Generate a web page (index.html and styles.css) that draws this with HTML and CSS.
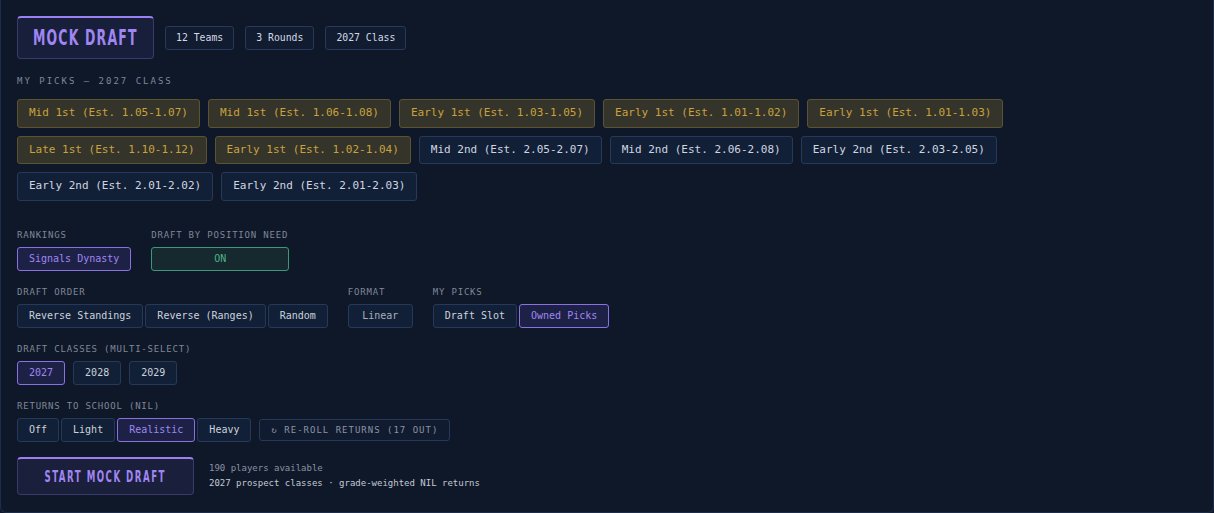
FILE: index.html
```html
<html>
  <head>
    <title>Mock Draft</title>
    <link rel="stylesheet" href="styles.css">
  </head>
  <body>
  <div id="main">
    <div class="header">
      <div class="title"><span>MOCK DRAFT</span></div>
      <span class="chip">12 Teams</span>
      <span class="chip">3 Rounds</span>
      <span class="chip">2027 Class</span>
    </div>

    <div class="picks-section">
      <div class="section-label">MY PICKS — 2027 CLASS</div>
      <div class="picks">
        <span class="pick gold">Mid 1st (Est. 1.05-1.07)</span>
        <span class="pick gold">Mid 1st (Est. 1.06-1.08)</span>
        <span class="pick gold">Early 1st (Est. 1.03-1.05)</span>
        <span class="pick gold">Early 1st (Est. 1.01-1.02)</span>
        <span class="pick gold">Early 1st (Est. 1.01-1.03)</span>
        <span class="pick gold">Late 1st (Est. 1.10-1.12)</span>
        <span class="pick gold">Early 1st (Est. 1.02-1.04)</span>
        <span class="pick">Mid 2nd (Est. 2.05-2.07)</span>
        <span class="pick">Mid 2nd (Est. 2.06-2.08)</span>
        <span class="pick">Early 2nd (Est. 2.03-2.05)</span>
        <span class="pick">Early 2nd (Est. 2.01-2.02)</span>
        <span class="pick">Early 2nd (Est. 2.01-2.03)</span>
      </div>
    </div>

    <div class="settings">
      <div class="row">
        <div class="group">
          <div class="label">RANKINGS</div>
          <div class="btns"><button class="btn active">Signals Dynasty</button></div>
        </div>
        <div class="group">
          <div class="label">DRAFT BY POSITION NEED</div>
          <div class="btns"><button class="btn toggle">ON</button></div>
        </div>
      </div>

      <div class="row">
        <div class="group">
          <div class="label">DRAFT ORDER</div>
          <div class="btns joined">
            <button class="btn">Reverse Standings</button>
            <button class="btn">Reverse (Ranges)</button>
            <button class="btn">Random</button>
          </div>
        </div>
        <div class="group">
          <div class="label">FORMAT</div>
          <div class="btns"><button class="btn dim">Linear</button></div>
        </div>
        <div class="group">
          <div class="label">MY PICKS</div>
          <div class="btns joined">
            <button class="btn">Draft Slot</button>
            <button class="btn active">Owned Picks</button>
          </div>
        </div>
      </div>

      <div class="row">
        <div class="group">
          <div class="label">DRAFT CLASSES (MULTI-SELECT)</div>
          <div class="btns">
            <button class="btn active">2027</button>
            <button class="btn">2028</button>
            <button class="btn">2029</button>
          </div>
        </div>
      </div>

      <div class="row">
        <div class="group">
          <div class="label">RETURNS TO SCHOOL (NIL)</div>
          <div class="btns">
            <div class="joined">
              <button class="btn">Off</button>
              <button class="btn">Light</button>
              <button class="btn active">Realistic</button>
              <button class="btn">Heavy</button>
            </div>
            <button class="reroll">↻ RE-ROLL RETURNS (17 OUT)</button>
          </div>
        </div>
      </div>
    </div>

    <div class="start-row">
      <button class="start"><span>START MOCK DRAFT</span></button>
      <div class="start-info">
        <div class="muted">190 players available</div>
        <div>2027 prospect classes · grade-weighted NIL returns</div>
      </div>
    </div>
  </div>
  </body>
</html>
```

FILE: styles.css
```css
html, body {
  margin: 0;
  background-color: #0f1829;
}
body {
  font-family: "DejaVu Sans Mono", "Liberation Mono", monospace;
  color: #d3d9e3;
}
#main {
  box-sizing: border-box;
  min-height: 100vh;
  padding: 16px;
  border: 1px solid #1d2d48;
  border-top: 0;
  border-radius: 0 0 6px 6px;
}
button {
  font-family: inherit;
  cursor: pointer;
}

/* header */
.header {
  display: flex;
  align-items: center;
  gap: 11px;
}
.title {
  box-sizing: border-box;
  width: 137px;
  height: 43px;
  display: flex;
  align-items: center;
  justify-content: center;
  background-color: #181f3b;
  border: 1px solid #3a3a6c;
  border-top: 2px solid #9a80f0;
  border-radius: 4px;
  white-space: nowrap;
}
.title span {
  display: inline-block;
  font-family: "DejaVu Sans Condensed", "DejaVu Sans", sans-serif;
  font-weight: bold;
  font-size: 21px;
  letter-spacing: 1.8px;
  color: #a086f2;
  transform: scaleX(0.66);
}
.chip {
  font-size: 9.8px;
  line-height: 14px;
  padding: 4px 10px;
  border: 1px solid #26395a;
  border-radius: 3px;
  background-color: #111c31;
  color: #d3d9e3;
}

/* picks */
.picks-section {
  margin-top: 16px;
}
.section-label {
  font-size: 9px;
  line-height: 13px;
  letter-spacing: 2px;
  color: #7f8797;
  margin-bottom: 11px;
}
.picks {
  display: flex;
  flex-wrap: wrap;
  gap: 8px;
}
.pick {
  font-size: 11px;
  line-height: 16.5px;
  padding: 5px 11px;
  border: 1px solid #26395a;
  border-radius: 3px;
  background-color: #122037;
  color: #d0d6e0;
}
.pick.gold {
  background-color: #35342a;
  border-color: #5c5331;
  color: #c9a23f;
}

/* settings */
.settings {
  margin-top: 28px;
}
.row {
  display: flex;
  gap: 20px;
  margin-bottom: 15px;
}
.label {
  font-size: 9px;
  line-height: 12px;
  letter-spacing: 0.8px;
  color: #7f8797;
  margin-bottom: 6px;
}
.btns {
  display: flex;
  align-items: center;
  gap: 8px;
}
.joined {
  display: flex;
  gap: 2px;
}
.btn {
  font-size: 10px;
  line-height: 14px;
  padding: 4px 11px;
  border: 1px solid #26395a;
  border-radius: 3px;
  background-color: #122037;
  color: #ccd2dc;
}
.btn.active {
  background-color: #1e2146;
  border-color: #8b70e2;
  color: #9f87f0;
}
.btn.dim {
  min-width: 65px;
  color: #a6aebb;
}
.btn.toggle {
  width: 138px;
  background-color: #16292f;
  border-color: #3f9878;
  color: #4db384;
}
.reroll {
  font-size: 9px;
  line-height: 12px;
  letter-spacing: 1px;
  padding: 4px 11px;
  border: 1px solid #26395a;
  border-radius: 3px;
  background-color: #111b2f;
  color: #8a93a5;
}

/* start */
.start-row {
  display: flex;
  align-items: center;
  gap: 15px;
}
.start {
  box-sizing: border-box;
  width: 177px;
  height: 38px;
  padding: 0;
  display: flex;
  align-items: center;
  justify-content: center;
  background-color: #1a1f3b;
  border: 1px solid #3a3a6c;
  border-top: 2px solid #9a80f0;
  border-radius: 4px;
  white-space: nowrap;
}
.start span {
  display: inline-block;
  font-family: "DejaVu Sans Condensed", "DejaVu Sans", sans-serif;
  font-weight: bold;
  font-size: 16px;
  letter-spacing: 2.5px;
  color: #a086f2;
  transform: scaleX(0.6);
}
.start-info {
  font-size: 9px;
  line-height: 15px;
  color: #c3c9d3;
}
.muted {
  color: #8a92a2;
}
```
